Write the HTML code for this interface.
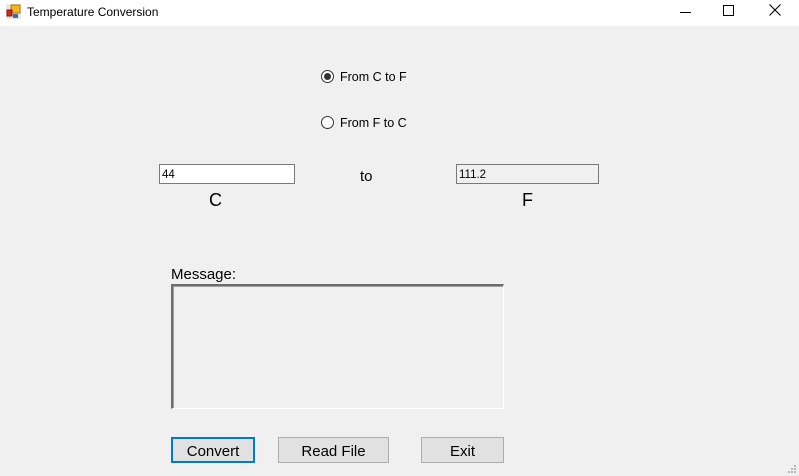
<!DOCTYPE html>
<html><head><meta charset="utf-8"><style>
html,body{margin:0;padding:0}
body{width:799px;height:476px;background:#f0f0f0;position:relative;overflow:hidden;font-family:"Liberation Sans",Arial,sans-serif;color:#000}
.a{position:absolute}
.title{left:0;top:0;width:799px;height:26px;background:#fff}
.radio{width:11px;height:11px;border:1px solid #333;border-radius:50%;background:#fff}
.dot{width:7px;height:7px;border-radius:50%;background:#333;left:2px;top:2px}
.btn{background:#e1e1e1;border:1px solid #adadad;box-sizing:border-box;font-size:15px;text-align:center;line-height:27px}
</style></head><body>
<div class="a title">
  <svg class="a" style="left:6px;top:4px" width="15" height="15" viewBox="0 0 15 15">
    <rect x="0" y="0" width="15" height="15" fill="#e8e8e8"/>
    <rect x="5" y="1" width="9" height="8" fill="#f2b51e" stroke="#b07a00"/>
    <rect x="1" y="6" width="5" height="6" fill="#d0281e" stroke="#8a1410"/>
    <rect x="7" y="10" width="5" height="4" fill="#3a6ab8"/>
  </svg>
  <div class="a" style="left:27px;top:5px;font-size:12px">Temperature Conversion</div>
  <div class="a" style="left:680px;top:12px;width:11px;height:1px;background:#000"></div>
  <div class="a" style="left:723px;top:5px;width:9px;height:9px;border:1px solid #000"></div>
  <svg class="a" style="left:769px;top:4px" width="12" height="12" viewBox="0 0 12 12"><path d="M0.5 0.5L11.5 11.5M11.5 0.5L0.5 11.5" stroke="#000" stroke-width="1.1"/></svg>
</div>

<div class="a radio" style="left:321px;top:70px"><div class="a dot"></div></div>
<div class="a" style="left:340px;top:70px;font-size:12.5px">From C to F</div>
<div class="a radio" style="left:321px;top:116px"></div>
<div class="a" style="left:340px;top:116px;font-size:12.5px">From F to C</div>

<div class="a" style="left:159px;top:164px;height:18px;border:1px solid #7a7a7a;background:#fff;font-size:11.5px;line-height:20px;padding-left:2px;width:132px">44</div>
<div class="a" style="left:360px;top:168px;font-size:15px">to</div>
<div class="a" style="left:456px;top:164px;width:139px;height:18px;border:1px solid #7a7a7a;background:#f0f0f0;font-size:11.5px;line-height:20px;padding-left:2px">111.2</div>
<div class="a" style="left:209px;top:190px;font-size:18px">C</div>
<div class="a" style="left:522px;top:190px;font-size:18px">F</div>

<div class="a" style="left:171px;top:266px;font-size:15px">Message:</div>
<div class="a" style="left:171px;top:284px;width:330px;height:122px;border-top:2px solid #6d6d6d;border-left:2px solid #6d6d6d;border-right:1px solid #fff;border-bottom:1px solid #fff;box-shadow:inset 1px 1px 0 #a0a0a0"></div>

<div class="a btn" style="left:171px;top:437px;width:84px;height:26px;border:2px solid #0078d7;line-height:25px">Convert</div>
<div class="a btn" style="left:278px;top:437px;width:111px;height:26px">Read File</div>
<div class="a btn" style="left:421px;top:437px;width:83px;height:26px">Exit</div>

<svg class="a" style="left:787px;top:464px" width="10" height="10" viewBox="0 0 10 10" fill="#b8b8b8">
<rect x="7" y="1" width="2" height="2"/><rect x="4" y="4" width="2" height="2"/><rect x="7" y="4" width="2" height="2"/><rect x="1" y="7" width="2" height="2"/><rect x="4" y="7" width="2" height="2"/><rect x="7" y="7" width="2" height="2"/>
</svg>
</body></html>
